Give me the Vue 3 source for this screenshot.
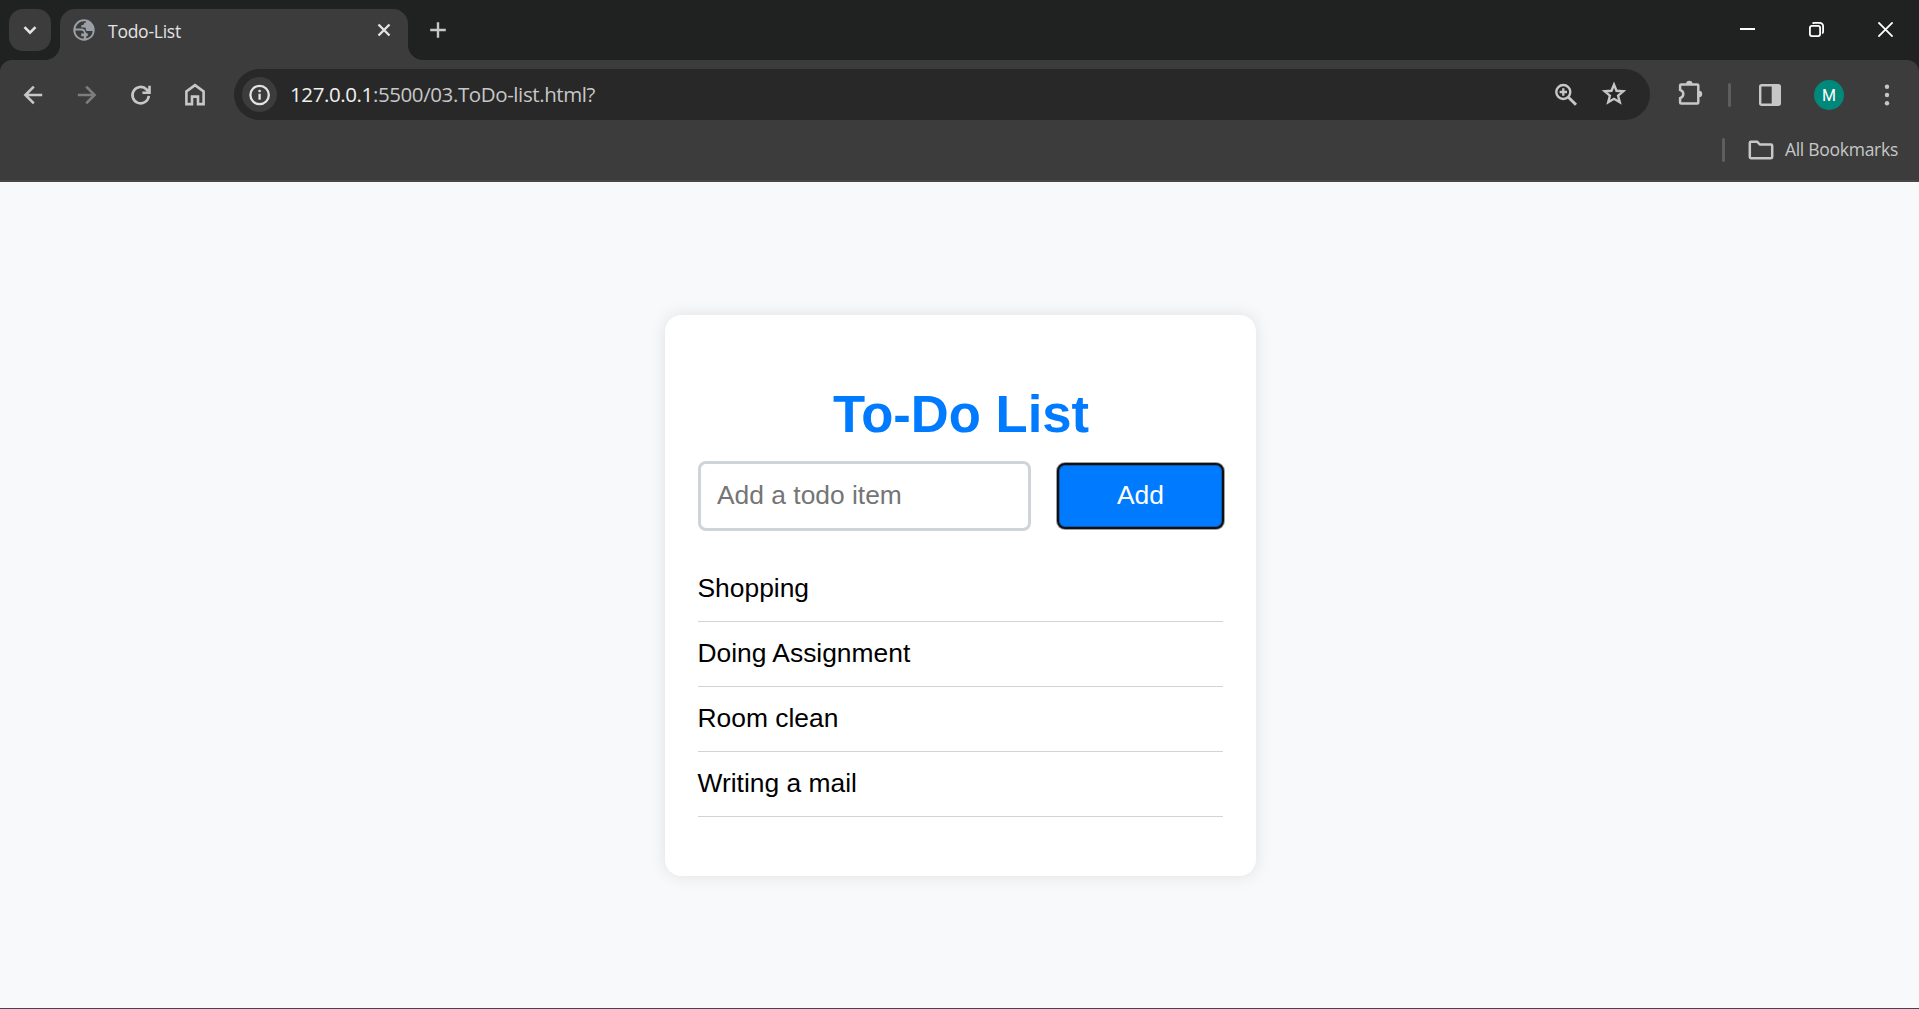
<script setup>
const todos = ['Shopping', 'Doing Assignment', 'Room clean', 'Writing a mail']
</script>

<template>
  <div class="window">
    <header class="tabstrip">
      <button class="tab-search" aria-label="Search tabs">
        <svg width="42" height="42" viewBox="0 0 42 42"><path d="M15.5 18.2L21 23.7L26.5 18.2" fill="none" stroke="#e3e3e3" stroke-width="2.6" /></svg>
      </button>
      <div class="tab">
        <svg class="globe" width="22" height="22" viewBox="0 0 22 22">
          <circle cx="11" cy="11" r="10.7" fill="#9aa0a6" />
          <path d="M2.4 11.4H8C10 11.4 11 12.4 11 14.6H8.2V17.2H10.8V19.6C6 19.5 2.4 16 2.4 11.4ZM13 2.5V3.6C11.4 3.8 10.6 4.4 10.5 6H8.4V8.6H11.8C12.6 8.6 12.8 9.4 12.8 10.4C12.8 11.4 13.6 11.9 14.8 11.9H19.6C19.3 15.8 16.8 18.6 13.4 19.4V17H14.8V14.4C13.4 14.2 12.4 13.4 12.2 12C11.8 10.2 10.6 9.4 8.4 9.4H2.6C3.2 5.6 6.6 2.2 11 2.2C11.7 2.2 12.4 2.3 13 2.5Z" fill="#3c3c3c" />
        </svg>
        <span class="tab-title">Todo-List</span>
        <svg class="tab-close" width="14" height="14" viewBox="0 0 14 14"><path d="M1.5 1.5L12.5 12.5M12.5 1.5L1.5 12.5" stroke="#e3e3e3" stroke-width="2.4" /></svg>
      </div>
      <svg class="new-tab" width="18" height="18" viewBox="0 0 18 18"><path d="M9 1.2V16.8M1.2 9H16.8" stroke="#c7c7c7" stroke-width="2.4" /></svg>
      <div class="controls">
        <svg width="15" height="15" viewBox="0 0 15 15"><path d="M0 7H15" stroke="#fff" stroke-width="2" /></svg>
        <svg width="15" height="15" viewBox="0 0 15 15" fill="none" stroke="#fff" stroke-width="1.8"><rect x="0.9" y="3.9" width="10.2" height="10.2" rx="2" /><path d="M3.6 1.6Q4.2 0.9 5.2 0.9H10.4Q14.1 0.9 14.1 4.6V9.6Q14.1 10.9 13.2 11.5" /></svg>
        <svg width="15" height="15" viewBox="0 0 15 15"><path d="M0.4 0.4L14.6 14.6M14.6 0.4L0.4 14.6" stroke="#fff" stroke-width="1.8" /></svg>
      </div>
    </header>

    <div class="chrome">
      <div class="toolbar">
        <nav class="nav">
          <svg viewBox="0 0 36 36" stroke="#c7c7c7"><path d="M27.2 18H10.8M18.8 9.6L10.4 18L18.8 26.4" /></svg>
          <svg viewBox="0 0 36 36" stroke="#7d7d7d"><path d="M8.8 18H25.2M17.2 9.6L25.6 18L17.2 26.4" /></svg>
          <svg viewBox="0 0 36 36" stroke="#c7c7c7"><path d="M25.8 18.9A8.2 8.2 0 1 1 23.6 12.5L26 15M26.5 8.8V15.7H19.4" /></svg>
          <svg viewBox="0 0 36 36" stroke="#c7c7c7"><path d="M9.4 27.1V14.5L18 8.2L26.6 14.5V27.1H21V19.6H15V27.1Z" /></svg>
        </nav>
        <div class="omnibox">
          <span class="site-info">
            <svg width="22" height="22" viewBox="0 0 22 22"><circle cx="10.6" cy="11" r="9.2" fill="none" stroke="#e3e3e3" stroke-width="2.3" /><circle cx="10.6" cy="7" r="1.35" fill="#e3e3e3" /><path d="M10.6 9.7V15.7" stroke="#e3e3e3" stroke-width="2.3" /></svg>
          </span>
          <span class="url"><span class="host">127.0.0.1</span>:5500/03.ToDo-list.html?</span>
          <svg class="zoom-icon" width="24" height="24" viewBox="0 0 24 24" fill="none" stroke="#c7c7c7" stroke-width="2.4"><circle cx="9.3" cy="9" r="7" /><path d="M14.4 14.2L22 21.8" stroke-width="2.9" /><path d="M9.3 5.3V12.7M5.6 9H13" stroke-width="2.3" /></svg>
          <svg class="star" width="26" height="26" viewBox="0 0 26 26"><path d="M13 3.6L15.5 9.8L22.3 10.3L17.1 14.7L18.8 21.3L13 17.8L7.2 21.3L8.9 14.7L3.7 10.3L10.5 9.8Z" fill="none" stroke="#c7c7c7" stroke-width="2.4" /></svg>
        </div>
        <svg class="puzzle" width="27" height="27" viewBox="0 0 27 27">
          <path d="M4.2 4.4H20.3Q21.3 4.4 21.3 5.4V22.4Q21.3 23.4 20.3 23.4H4.2Q3.1 23.4 3.1 22.4V18.2Q6.3 17 6.3 14Q6.3 11 3.1 9.8V5.4Q3.1 4.4 4.2 4.4Z" fill="none" stroke="#c7c7c7" stroke-width="2.5" />
          <path d="M9.1 4A3.2 3.2 0 0 1 15.5 4ZM22 10.7A3.2 3.2 0 0 1 22 17.1Z" fill="#c7c7c7" />
        </svg>
        <span class="divider toolbar-divider"></span>
        <svg class="panel" width="22" height="22" viewBox="0 0 22 22"><rect x="1.2" y="1.2" width="19.6" height="19.6" rx="1.5" fill="none" stroke="#c7c7c7" stroke-width="2.4" /><path d="M12.7 1H20.6V21H12.7Z" fill="#c7c7c7" /></svg>
        <span class="avatar">M</span>
        <svg class="menu" width="6" height="24" viewBox="0 0 6 24" fill="#c7c7c7"><circle cx="3" cy="3.7" r="2.2" /><circle cx="3" cy="12" r="2.2" /><circle cx="3" cy="20.3" r="2.2" /></svg>
      </div>
      <div class="bookmarks">
        <span class="divider"></span>
        <svg class="folder" width="26" height="20" viewBox="0 0 26 20"><path d="M1.8 3Q1.8 1.8 3 1.8H9.2L12 4.6H23Q24.2 4.6 24.2 5.8V17Q24.2 18.2 23 18.2H3Q1.8 18.2 1.8 17Z" fill="none" stroke="#c7c7c7" stroke-width="2.5" /></svg>
        <span class="bookmarks-label">All Bookmarks</span>
      </div>
    </div>

    <main class="page">
      <section class="card">
        <h1>To-Do List</h1>
        <form class="entry" @submit.prevent>
          <input type="text" placeholder="Add a todo item" />
          <button type="submit">Add</button>
        </form>
        <ul>
          <li v-for="todo in todos" :key="todo">{{ todo }}</li>
        </ul>
      </section>
    </main>
  </div>
</template>

<style>
body { margin: 0; overflow: hidden; }
</style>

<style scoped>
* { box-sizing: border-box; }
svg { display: block; flex: none; }
.window {
  width: 100%;
  height: 100vh;
  display: flex;
  flex-direction: column;
  background: #202221;
  font-family: "Open Sans", "Noto Sans", sans-serif;
}
.tabstrip { height: 60px; flex: none; display: flex; align-items: flex-start; padding: 9px 26px 0 9px; }
.tab-search { width: 42px; height: 42px; padding: 0; border: 0; border-radius: 14px; background: #3c3c3c; }
.tab {
  position: relative;
  width: 348px;
  height: 51px;
  margin-left: 9px;
  padding: 0 17px 9px 13px;
  display: flex;
  align-items: center;
  background: #3c3c3c;
  border-radius: 15px 15px 0 0;
}
.tab::before, .tab::after { content: ""; position: absolute; bottom: 0; width: 15px; height: 15px; }
.tab::before { left: -15px; background: radial-gradient(circle at 0 0, transparent 14.5px, #3c3c3c 15.5px); }
.tab::after { right: -15px; background: radial-gradient(circle at 100% 0, transparent 14.5px, #3c3c3c 15.5px); }
.tab-title { margin: 1px auto 0 13px; font-size: 17.5px; letter-spacing: -0.25px; color: #e3e3e3; white-space: nowrap; }
.new-tab { margin: 12px 0 0 21px; }
.controls { margin: 13px 0 0 auto; display: flex; gap: 54px; }

.chrome { height: 122px; flex: none; background: #3c3c3c; border-bottom: 2px solid #474747; border-radius: 12px 12px 0 0; padding-top: 9px; }
.toolbar { height: 51px; display: flex; align-items: center; }
.nav { display: flex; gap: 18px; padding-left: 15px; }
.nav svg { width: 36px; height: 36px; fill: none; stroke-width: 2.6; }
.omnibox { width: 1416px; height: 51px; margin-left: 21px; padding: 0 23px 0 8px; display: flex; align-items: center; background: #282828; border-radius: 26px; }
.site-info { width: 35px; height: 35px; display: flex; align-items: center; justify-content: center; border-radius: 50%; background: #3c3c3c; }
.url { margin: -2px auto 0 13px; font-size: 20.5px; letter-spacing: -0.4px; color: #c7c7c7; white-space: nowrap; }
.host { color: #f0f0f0; }
.zoom-icon { margin-right: 23px; }
.star { margin-top: -1px; }
.puzzle { margin-left: 27px; margin-top: -3px; }
.divider { width: 3px; height: 24px; border-radius: 2px; background: #5e5e5e; }
.toolbar-divider { margin-left: 24px; }
.panel { margin-left: 28px; }
.avatar { width: 30px; height: 30px; margin-left: 33px; border-radius: 50%; background: #00897b; color: #fff; font: 16px/31px Roboto, sans-serif; text-align: center; }
.menu { margin-left: 40px; }
.bookmarks { height: 60px; padding: 0 21px 1px 0; display: flex; align-items: center; justify-content: flex-end; }
.folder { margin-left: 23px; }
.bookmarks-label { margin: -1px 0 0 11px; font-size: 17.5px; letter-spacing: -0.27px; color: #c7c7c7; white-space: nowrap; }

.page { flex: 1; padding-top: 133px; background: #f8f9fa; border-bottom: 1px solid #4a4058; font-family: "Liberation Sans", Arial, sans-serif; }
.card { width: 591px; height: 561px; margin: 0 auto 0 665px; padding: 69px 33px 0; background: #fff; border-radius: 16.5px; box-shadow: 0 0 16.5px rgba(0, 0, 0, 0.1); }
h1 { margin: 0 0 18px; font-size: 52.6px; line-height: 59px; text-align: center; text-indent: 1px; color: #007bff; }
.entry { display: flex; align-items: center; justify-content: space-between; }
input { width: 333px; height: 70px; padding: 0 16px 2px; border: 3px solid #ced4da; border-radius: 8px; font: 26.4px "Liberation Sans", Arial, sans-serif; outline: 0; background: #fff; }
input::placeholder { color: #757575; }
.entry button { width: 167px; height: 66px; margin: 0 -1px 0 0; padding: 0 0 2px; border: 2px solid #101010; border-radius: 8px; background: #007bff; box-shadow: 0 0 0 1px rgba(16, 16, 16, 0.4), inset 0 0 0 1px rgba(16, 16, 16, 0.3); color: #fff; font: 26.4px "Liberation Sans", Arial, sans-serif; }
ul { margin: 26px 0 0; padding: 0; list-style: none; }
li { height: 65px; padding-top: 16px; border-bottom: 1px solid #ced4da; font-size: 26.4px; line-height: 31px; text-indent: -0.5px; color: #000; }
</style>
